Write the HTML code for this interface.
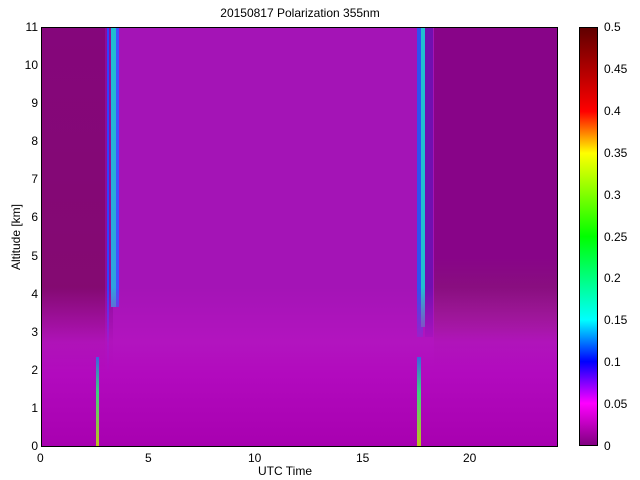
<!DOCTYPE html>
<html><head><style>
body{margin:0;width:640px;height:480px;background:#fff;position:relative;overflow:hidden;font-family:"Liberation Sans",sans-serif;font-size:12px;color:#000}
div{position:absolute}
.t{white-space:nowrap}
.yl{right:602px;text-align:right}
</style></head><body>
<div class="t" style="left:0;width:600px;top:6px;text-align:center">20150817 Polarization 355nm</div>
<!-- plot -->
<div style="left:41px;top:27px;width:516px;height:419px;background:#a414b6;overflow:hidden">
 <div style="left:0;top:0;width:64px;height:419px;background:#870487"></div>
 <div style="left:64px;top:0;width:8px;height:419px;background:#8c0c9c"></div>
 <div style="left:66px;top:0;width:2px;height:419px;background:#3040ff"></div>
 <div style="left:70px;top:0;width:5px;height:280px;background:linear-gradient(180deg,#20c0d0,#30a0e0)"></div>
 <div style="left:75px;top:0;width:3px;height:280px;background:#4050ff"></div>
 <div style="left:0;top:0;width:64px;height:419px;background:linear-gradient(180deg,rgba(120,20,40,0.12),rgba(120,30,40,0.25) 75%,rgba(0,0,0,0))"></div>
 <div style="left:376px;top:0;width:6px;height:310px;background:#3050f0"></div>
 <div style="left:380px;top:0;width:4px;height:300px;background:#20c0d0"></div>
 <div style="left:384px;top:0;width:8px;height:310px;background:#7010b0"></div>
 <div style="left:393px;top:0;width:123px;height:419px;background:linear-gradient(180deg,#880488 0%,#880488 55%,#8a1c74 72%,#900c98 80%)"></div>
 <div style="left:0;top:260px;width:516px;height:159px;background:linear-gradient(180deg,rgba(180,20,192,0) 0%,rgba(180,20,192,0.9) 35%,#b20abe 55%,#a800b0 100%)"></div>
 <div style="left:55px;top:330px;width:3px;height:89px;background:linear-gradient(180deg,#4060e0,#40d080 40%,#c0c020)"></div>
 <div style="left:376px;top:330px;width:4px;height:89px;background:linear-gradient(180deg,#4060e0,#40d080 40%,#c0c020)"></div>
</div>
<div style="left:41px;top:27px;width:515px;height:418px;border:1px solid #000"></div>
<!-- y ticks -->
<div class="t yl" style="top:20px">11</div><div class="t yl" style="top:58px">10</div><div class="t yl" style="top:96px">9</div><div class="t yl" style="top:134px">8</div><div class="t yl" style="top:172px">7</div><div class="t yl" style="top:210px">6</div><div class="t yl" style="top:249px">5</div><div class="t yl" style="top:287px">4</div><div class="t yl" style="top:325px">3</div><div class="t yl" style="top:363px">2</div><div class="t yl" style="top:401px">1</div><div class="t yl" style="top:439px">0</div>
<div class="t" style="left:-24px;top:230px;transform:rotate(-90deg);width:80px;text-align:center">Altitude [km]</div>
<!-- x ticks -->
<div class="t" style="left:37px;top:451px">0</div><div class="t" style="left:145px;top:451px">5</div><div class="t" style="left:248px;top:451px">10</div><div class="t" style="left:356px;top:451px">15</div><div class="t" style="left:463px;top:451px">20</div>
<div class="t" style="left:258px;top:464px">UTC Time</div>
<!-- colorbar -->
<div style="left:579px;top:27px;width:19px;height:419px;border:1px solid #000;box-sizing:border-box;background:linear-gradient(0deg,#800080 0%,#ff00ff 10%,#0000ff 20%,#00ffff 30%,#00ff00 50%,#ffff00 70%,#ff0000 80%,#600000 100%)"></div>
<div class="t" style="left:604px;top:20px">0.5</div><div class="t" style="left:604px;top:62px">0.45</div><div class="t" style="left:604px;top:104px">0.4</div><div class="t" style="left:604px;top:146px">0.35</div><div class="t" style="left:604px;top:188px">0.3</div><div class="t" style="left:604px;top:230px">0.25</div><div class="t" style="left:604px;top:271px">0.2</div><div class="t" style="left:604px;top:313px">0.15</div><div class="t" style="left:604px;top:355px">0.1</div><div class="t" style="left:604px;top:397px">0.05</div><div class="t" style="left:604px;top:439px">0</div>
</body></html>
